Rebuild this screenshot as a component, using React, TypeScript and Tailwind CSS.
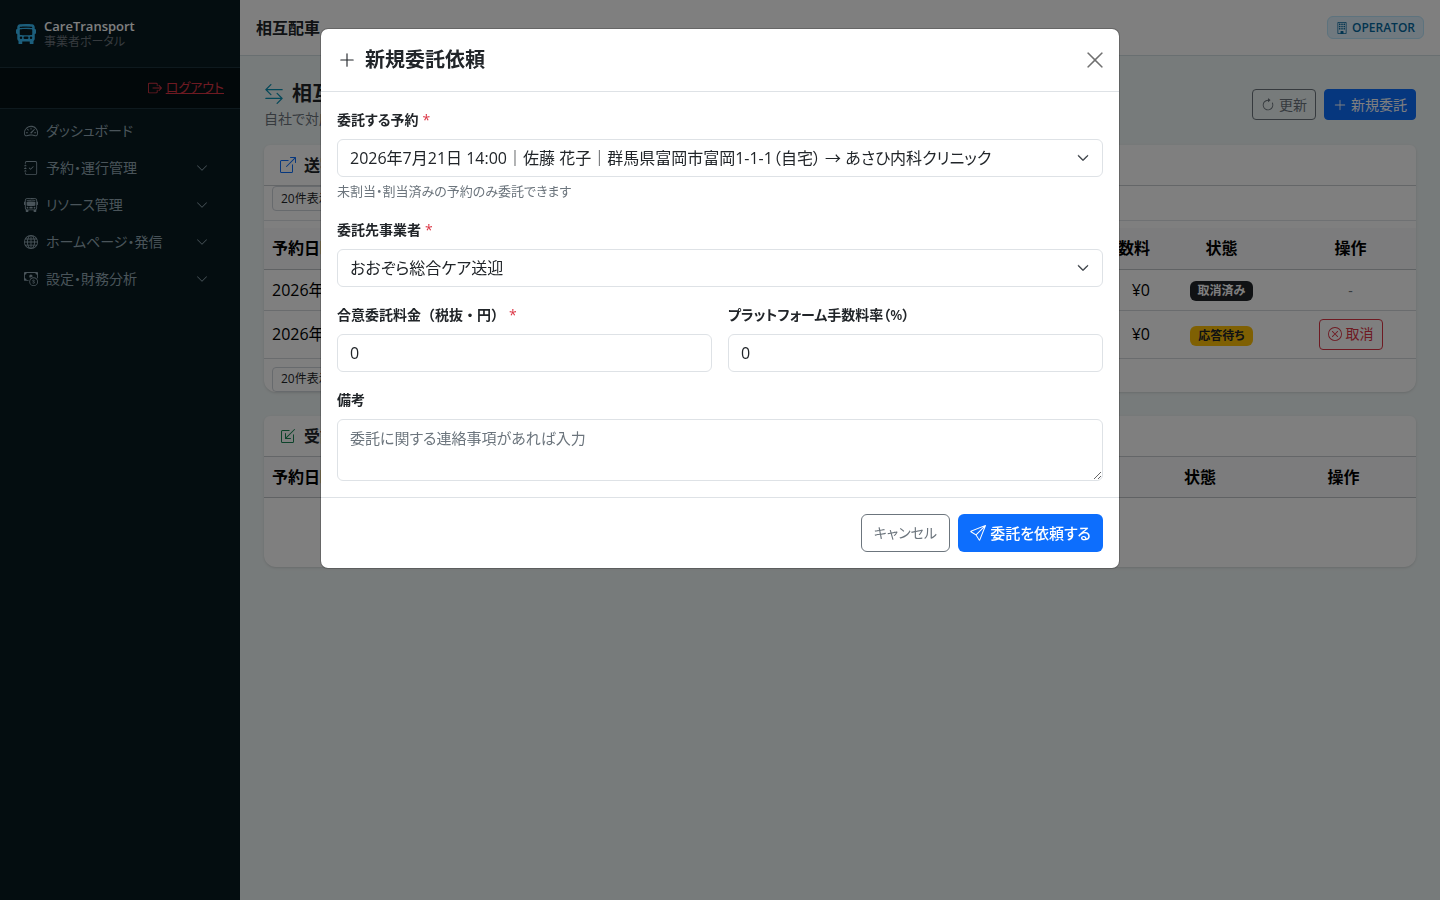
import { useState } from 'react'
import type { ReactNode } from 'react'
import type { IconType } from 'react-icons'
import {
  BsArrowClockwise,
  BsArrowLeftRight,
  BsBoxArrowInDownLeft,
  BsBoxArrowRight,
  BsBoxArrowUpRight,
  BsBuilding,
  BsBusFront,
  BsBusFrontFill,
  BsCashCoin,
  BsChevronDown,
  BsGlobe,
  BsJournalCheck,
  BsPlusLg,
  BsSend,
  BsSpeedometer2,
  BsXCircle,
  BsXLg,
} from 'react-icons/bs'

/**
 * Sidebar navigation items
 */
const navigation: { name: string; icon: IconType; expandable: boolean }[] = [
  { name: 'ダッシュボード', icon: BsSpeedometer2, expandable: false },
  { name: '予約・運行管理', icon: BsJournalCheck, expandable: true },
  { name: 'リソース管理', icon: BsBusFront, expandable: true },
  { name: 'ホームページ・発信', icon: BsGlobe, expandable: true },
  { name: '設定・財務分析', icon: BsCashCoin, expandable: true },
]

const outgoing = [
  { date: '2026年7月20日', fee: '¥0', status: '取消済み', cancellable: false },
  { date: '2026年7月21日', fee: '¥0', status: '応答待ち', cancellable: true },
]

const fieldClass =
  'block w-full h-[38px] rounded-md border border-[#dee2e6] bg-white px-3 text-base text-[#212529] focus:outline-none focus:border-blue-300'

function Sidebar() {
  return (
    <aside className="w-60 shrink-0 bg-[#081a20]">
      <div className="flex h-[68px] items-center gap-2 border-b border-[#1c323d] px-4">
        <BsBusFrontFill className="size-5 text-[#38bdf8]" />
        <div>
          <div className="text-[13px] leading-4 font-semibold text-white">CareTransport</div>
          <div className="text-xs leading-4 text-[#6c757d]">事業者ポータル</div>
        </div>
      </div>
      <div className="flex h-[41px] items-center justify-end border-b border-[#1c323d] bg-[#041115] px-4">
        <a href="#logout" className="flex items-center gap-1 text-[13px] text-[#dc3545]">
          <BsBoxArrowRight className="size-[14px]" />
          <span className="underline">ログアウト</span>
        </a>
      </div>
      <nav className="px-2 pt-[3px]" aria-label="メインメニュー">
        {navigation.map(({ name, icon: Icon, expandable }) => (
          <a
            key={name}
            href="#menu"
            className="flex h-[37px] items-center gap-2 px-4 text-sm text-[#94a9b5]"
          >
            <Icon className="size-[14px]" />
            <span className="flex-1">{name}</span>
            {expandable && <BsChevronDown className="mr-2 size-3" />}
          </a>
        ))}
      </nav>
    </aside>
  )
}

function PageSizeSelect({ id }: { id: string }) {
  return (
    <select
      id={id}
      aria-label="表示件数"
      className="block h-[25px] w-24 appearance-none rounded-sm border border-[#ced4da] bg-white px-2 text-xs leading-4 text-[#212529]"
    >
      <option>20件表示</option>
    </select>
  )
}

function CardHeader({ icon, title }: { icon: ReactNode; title: string }) {
  return (
    <div className="flex h-[41px] items-center gap-2 border-b border-[#c9cdd1] px-4">
      {icon}
      <h2 className="text-base font-semibold text-[#212529]">{title}</h2>
    </div>
  )
}

function OutgoingCard() {
  return (
    <section className="mb-6 overflow-hidden rounded-t-md rounded-b-xl bg-white shadow-sm">
      <CardHeader icon={<BsBoxArrowUpRight className="size-4 text-[#0d6efd]" />} title="送客・委託中" />
      <div className="mb-[7px] h-[35px] border-b border-[#dee2e6] px-2">
        <PageSizeSelect id="outgoing-size-top" />
      </div>
      <table className="w-full table-fixed border-collapse text-base text-black">
        <thead>
          <tr className="h-[41px] border-b border-[#c0c4c8] bg-[#f8f9fa]">
            <th className="px-2 text-left font-semibold">予約日時</th>
            <th className="px-2 text-right font-semibold">手数料</th>
            <th className="w-[127px] px-2 text-center font-semibold">状態</th>
            <th className="w-[131px] px-2 text-center font-semibold">操作</th>
          </tr>
        </thead>
        <tbody>
          {outgoing.map((row) => (
            <tr
              key={row.date}
              className={`border-b border-[#d5d9dd] ${row.cancellable ? 'h-[48px]' : 'h-[41px]'}`}
            >
              <td className="px-2">{row.date}</td>
              <td className="px-2 text-right">{row.fee}</td>
              <td className="px-2 text-center">
                <span
                  className={`inline-block rounded-md px-2 text-xs leading-5 font-bold align-middle ${
                    row.cancellable ? 'bg-[#ffc107] text-[#212529]' : 'bg-[#212529] text-white'
                  }`}
                >
                  {row.status}
                </span>
              </td>
              <td className="px-2 text-center">
                {row.cancellable ? (
                  <button
                    type="button"
                    className="inline-flex h-[31px] items-center gap-1 rounded-sm border border-[#dc3545] px-2 align-middle text-sm text-[#dc3545]"
                  >
                    <BsXCircle className="size-[14px]" />
                    取消
                  </button>
                ) : (
                  <span className="text-sm text-[#6c757d]">-</span>
                )}
              </td>
            </tr>
          ))}
        </tbody>
      </table>
      <div className="px-2 pt-2">
        <PageSizeSelect id="outgoing-size-bottom" />
      </div>
    </section>
  )
}

function IncomingCard() {
  return (
    <section className="overflow-hidden rounded-t-md rounded-b-xl bg-white shadow-sm">
      <CardHeader icon={<BsBoxArrowInDownLeft className="size-4 text-[#198754]" />} title="受託依頼" />
      <table className="w-full table-fixed border-collapse text-base text-black">
        <thead>
          <tr className="h-[41px] border-b border-[#c0c4c8] bg-[#f8f9fa]">
            <th className="px-2 text-left font-semibold">予約日時</th>
            <th className="w-[142px] px-2 text-center font-semibold">状態</th>
            <th className="w-[145px] px-2 text-center font-semibold">操作</th>
          </tr>
        </thead>
        <tbody>
          <tr className="h-[69px]">
            <td colSpan={3} />
          </tr>
        </tbody>
      </table>
    </section>
  )
}

function Label({ htmlFor, required, children }: { htmlFor: string; required?: boolean; children: ReactNode }) {
  return (
    <label htmlFor={htmlFor} className="mb-2 block text-sm leading-[23px] font-semibold text-[#212529]">
      {children}
      {required && <span className="ml-1 font-normal text-[#dc3545]">*</span>}
    </label>
  )
}

function SelectField({ id, option }: { id: string; option: string }) {
  return (
    <div className="relative">
      <select id={id} className={`${fieldClass} appearance-none pr-9`}>
        <option>{option}</option>
      </select>
      <BsChevronDown
        className="pointer-events-none absolute top-[13px] right-[14px] size-3 stroke-1 text-[#343a40]"
        aria-hidden="true"
      />
    </div>
  )
}

function RequestDialog({ onClose }: { onClose: () => void }) {
  return (
    <div className="fixed inset-0 z-50 overflow-y-auto bg-black/50 px-4">
      <form
        role="dialog"
        aria-modal="true"
        aria-labelledby="dialog-title"
        onSubmit={(e) => e.preventDefault()}
        className="mx-auto my-7 max-w-[800px] rounded-lg border border-black/20 bg-white bg-clip-padding"
      >
        <header className="flex items-center border-b border-[#dee2e6] p-4">
          <BsPlusLg className="mr-2 size-5 p-px text-[#212529]" />
          <h2 id="dialog-title" className="flex-1 text-xl leading-[30px] font-semibold text-[#212529]">
            新規委託依頼
          </h2>
          <button type="button" onClick={onClose} aria-label="閉じる" className="-mr-0.5 text-[#6f6f6f]">
            <BsXLg className="size-5 stroke-[0.3]" />
          </button>
        </header>

        <div className="space-y-4 p-4">
          <div>
            <Label htmlFor="booking" required>委託する予約</Label>
            <SelectField
              id="booking"
              option="2026年7月21日 14:00｜佐藤 花子｜群馬県富岡市富岡1-1-1（自宅） → あさひ内科クリニック"
            />
            <p className="mt-1 text-[13px] leading-[21px] text-[#6c757d]">未割当・割当済みの予約のみ委託できます</p>
          </div>
          <div>
            <Label htmlFor="partner" required>委託先事業者</Label>
            <SelectField id="partner" option="おおぞら総合ケア送迎" />
          </div>
          <div className="grid grid-cols-2 gap-4">
            <div>
              <Label htmlFor="price" required>
                <span className="[font-feature-settings:normal]">合意委託料金（税抜・円）</span>
              </Label>
              <input id="price" type="text" inputMode="numeric" defaultValue="0" className={fieldClass} />
            </div>
            <div>
              <Label htmlFor="rate">プラットフォーム手数料率（%）</Label>
              <input id="rate" type="text" inputMode="numeric" defaultValue="0" className={fieldClass} />
            </div>
          </div>
          <div>
            <Label htmlFor="note">備考</Label>
            <textarea
              id="note"
              rows={2}
              placeholder="委託に関する連絡事項があれば入力"
              className="block h-[62px] w-full resize-y rounded-md border border-[#dee2e6] px-3 py-1.5 text-[15px] leading-6 text-[#212529] placeholder:text-[#6c757d]"
            />
          </div>
        </div>

        <footer className="flex justify-end gap-2 border-t border-[#dee2e6] p-4">
          <button
            type="button"
            onClick={onClose}
            className="h-[38px] rounded-md border border-[#6c757d] px-3 text-sm text-[#6c757d]"
          >
            キャンセル
          </button>
          <button
            type="submit"
            className="flex h-[38px] items-center gap-1 rounded-md bg-[#0d6efd] px-3 text-[15px] font-medium text-white"
          >
            <BsSend className="size-4" />
            委託を依頼する
          </button>
        </footer>
      </form>
    </div>
  )
}

export default function App() {
  const [dialogOpen, setDialogOpen] = useState(true)

  return (
    <div className="flex min-h-screen bg-[#eff6f6] font-['Open_Sans','Noto_Sans_CJK_JP',sans-serif] [font-feature-settings:'palt']">
      <Sidebar />
      <div className="min-w-0 flex-1">
        <header className="flex h-14 items-center justify-between border-b border-[#d3dfe3] bg-white px-4">
          <div className="text-base font-semibold text-[#212529]">相互配車</div>
          <span className="flex h-[23px] items-center gap-1 rounded-md border border-[#bae6fd] bg-[#e0f2fe] px-2 text-xs font-semibold text-[#0369a1]">
            <BsBuilding className="size-3" />
            OPERATOR
          </span>
        </header>

        <main className="p-6">
          <div className="mb-4 flex items-center justify-between">
            <div>
              <h1 className="flex items-center gap-2 text-xl leading-7 font-semibold text-[#212529]">
                <BsArrowLeftRight className="size-5 text-[#0891b2]" />
                相互配車
              </h1>
              <p className="text-sm leading-[21px] text-[#6c757d]">自社で対応</p>
            </div>
            <div className="flex gap-2">
              <button
                type="button"
                className="flex h-[31px] items-center gap-1 rounded-sm border border-[#6c757d] px-2 text-sm text-[#6c757d]"
              >
                <BsArrowClockwise className="size-[14px]" />
                更新
              </button>
              <button
                type="button"
                onClick={() => setDialogOpen(true)}
                className="flex h-[31px] items-center gap-1 rounded-sm border border-[#0d6efd] bg-[#0d6efd] px-2 text-sm text-white"
              >
                <BsPlusLg className="size-[14px]" />
                新規委託
              </button>
            </div>
          </div>
          <OutgoingCard />
          <IncomingCard />
        </main>
      </div>
      {dialogOpen && <RequestDialog onClose={() => setDialogOpen(false)} />}
    </div>
  )
}
